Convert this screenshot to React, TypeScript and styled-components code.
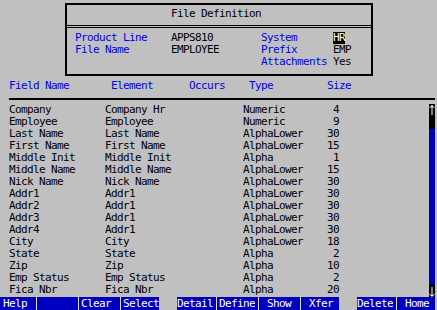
import styled, { createGlobalStyle } from 'styled-components';

const BG = '#c0c0c0';
const LABEL_BLUE = '#0000e8';
const BAR_BLUE = '#0000c0';

const GlobalStyle = createGlobalStyle`
  html, body {
    margin: 0;
    padding: 0;
    background: ${BG};
  }
  body {
    font-family: "DejaVu Sans Mono", "Liberation Mono", monospace;
    font-size: 11px;
    letter-spacing: -0.62px;
    line-height: 12px;
    color: #000;
  }
`;

const Screen = styled.div`
  width: 437px;
  height: 310px;
  display: flex;
  flex-direction: column;
  overflow: hidden;
  background: ${BG};
`;

const DefBox = styled.div`
  box-sizing: border-box;
  width: 308px;
  height: 73px;
  margin: 3px 0 0 65px;
  border: 2px solid #000;
  display: flex;
  flex-direction: column;
`;

const BoxTitle = styled.div`
  box-sizing: border-box;
  height: 23px;
  padding: 3px 0 0 104px;
  border-bottom: 3px double #000;
`;

const InfoGrid = styled.div`
  display: grid;
  grid-template-columns: 96px 90px 72px auto;
  grid-auto-rows: 12px;
  padding: 4px 0 0 8px;
`;

const Label = styled.span`
  color: ${LABEL_BLUE};
  white-space: pre;
`;

const Value = styled.span<{ $hl?: boolean }>`
  white-space: pre;
  justify-self: start;
  background: ${(p) => (p.$hl ? '#000' : 'transparent')};
  color: ${(p) => (p.$hl ? '#fff' : '#000')};
`;

const HeadRow = styled.div`
  display: grid;
  grid-template-columns: 102px 78px 60px 78px auto;
  height: 12px;
  margin-top: 4px;
  padding-left: 9px;
  color: ${LABEL_BLUE};
`;

const Rule = styled.div`
  height: 2px;
  margin: 6px 2px 0 9px;
  background: #000;
`;

const Body = styled.div`
  display: flex;
  margin-top: 4px;
  height: 193px;
`;

const List = styled.div`
  flex: 1;
  display: flex;
  flex-direction: column;
`;

const Row = styled.div`
  display: grid;
  grid-template-columns: 96px 138px 72px 24px;
  height: 12px;
  padding-left: 9px;
  white-space: pre;
`;

const Size = styled.span`
  text-align: right;
`;

const Scroll = styled.div`
  width: 6px;
  margin-right: 2px;
  display: flex;
  flex-direction: column;
  background: ${BAR_BLUE};
`;

const ScrollCap = styled.div<{ $h: number }>`
  height: ${(p) => p.$h}px;
  background: #000;
  display: flex;
  align-items: flex-start;
  justify-content: center;
`;

const ScrollTrack = styled.div`
  flex: 1;
`;

const KeyBar = styled.div`
  display: flex;
  height: 13px;
  margin-top: auto;
`;

const Key = styled.span<{ $w: number; $pad?: number }>`
  box-sizing: border-box;
  width: ${(p) => p.$w}px;
  padding-left: ${(p) => p.$pad ?? 0}px;
  background: ${BAR_BLUE};
  color: #fff;
  white-space: pre;
  line-height: 13px;
`;

const Sep = styled.span`
  width: 6px;
  background: ${BAR_BLUE};
  display: flex;
  justify-content: center;
  &::before {
    content: '';
    width: 1px;
    background: #d8d8d8;
  }
`;

const Gap = styled.span`
  width: 18px;
`;

const rows: [string, string, string, string][] = [
  ['Company', 'Company Hr', 'Numeric', '4'],
  ['Employee', 'Employee', 'Numeric', '9'],
  ['Last Name', 'Last Name', 'AlphaLower', '30'],
  ['First Name', 'First Name', 'AlphaLower', '15'],
  ['Middle Init', 'Middle Init', 'Alpha', '1'],
  ['Middle Name', 'Middle Name', 'AlphaLower', '15'],
  ['Nick Name', 'Nick Name', 'AlphaLower', '30'],
  ['Addr1', 'Addr1', 'AlphaLower', '30'],
  ['Addr2', 'Addr1', 'AlphaLower', '30'],
  ['Addr3', 'Addr1', 'AlphaLower', '30'],
  ['Addr4', 'Addr1', 'AlphaLower', '30'],
  ['City', 'City', 'AlphaLower', '18'],
  ['State', 'State', 'Alpha', '2'],
  ['Zip', 'Zip', 'Alpha', '10'],
  ['Emp Status', 'Emp Status', 'Alpha', '2'],
  ['Fica Nbr', 'Fica Nbr', 'Alpha', '20'],
];

const Arrow = ({ down }: { down?: boolean }) => (
  <svg width="6" height="11" viewBox="0 0 6 11" style={{ marginTop: down ? 2 : 1 }}>
    <g fill="#fff" transform={down ? 'rotate(180 3 5.5)' : undefined}>
      <rect x="2.5" y="0" width="1" height="10" />
      <rect x="1.5" y="1" width="3" height="1" />
      <rect x="0.5" y="2" width="1" height="1" />
      <rect x="4.5" y="2" width="1" height="1" />
    </g>
  </svg>
);

const App = () => {
  return (
    <Screen>
      <GlobalStyle />
      <DefBox>
        <BoxTitle>File Definition</BoxTitle>
        <InfoGrid>
          <Label>Product Line</Label>
          <Value>APPS810</Value>
          <Label>System</Label>
          <Value $hl>HR</Value>
          <Label>File Name</Label>
          <Value>EMPLOYEE</Value>
          <Label>Prefix</Label>
          <Value>EMP</Value>
          <span />
          <span />
          <Label>Attachments</Label>
          <Value>Yes</Value>
        </InfoGrid>
      </DefBox>

      <HeadRow>
        <span>Field Name</span>
        <span>Element</span>
        <span>Occurs</span>
        <span>Type</span>
        <span>Size</span>
      </HeadRow>
      <Rule />

      <Body>
        <List>
          {rows.map(([field, element, type, size]) => (
            <Row key={field}>
              <span>{field}</span>
              <span>{element}</span>
              <span>{type}</span>
              <Size>{size}</Size>
            </Row>
          ))}
        </List>
        <Scroll>
          <ScrollCap $h={25}>
            <Arrow />
          </ScrollCap>
          <ScrollTrack />
          <ScrollCap $h={13}>
            <Arrow down />
          </ScrollCap>
        </Scroll>
      </Body>

      <KeyBar>
        <Key $w={33} $pad={3}>Help</Key>
        <Sep />
        <Key $w={36} />
        <Sep />
        <Key $w={36}>Clear</Key>
        <Sep />
        <Key $w={36}>Select</Key>
        <Gap />
        <Key $w={36}>Detail</Key>
        <Sep />
        <Key $w={36}>Define</Key>
        <Sep />
        <Key $w={36}> Show</Key>
        <Sep />
        <Key $w={36}> Xfer</Key>
        <Gap />
        <Key $w={36}>Delete</Key>
        <Sep />
        <Key $w={36}> Home</Key>
      </KeyBar>
    </Screen>
  );
};

export default App;
